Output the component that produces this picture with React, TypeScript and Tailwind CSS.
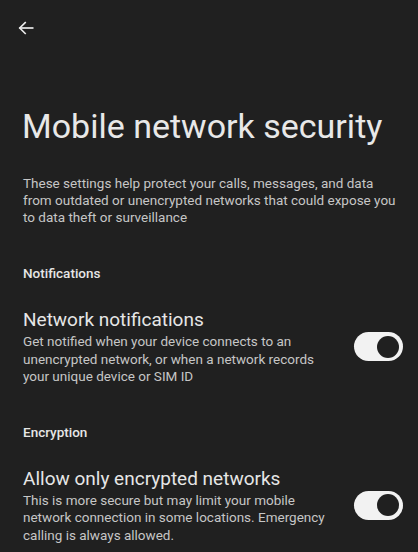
import React from "react";

function Toggle() {
  return (
    <div className="w-[49px] h-[29px] rounded-full bg-[#f2f2f2] flex items-center justify-end pr-[4px] shrink-0">
      <div className="w-[22px] h-[22px] rounded-full bg-[#202020]" />
    </div>
  );
}

function Row({ title, desc }: { title: string; desc: string }) {
  return (
    <div className="flex items-center pl-[23px] pr-[15px]">
      <div className="flex-1 min-w-0">
        <div className="text-[19px] leading-[24px] text-[#e6e6e6]">{title}</div>
        <div className="text-[13.5px] leading-[17.5px] text-[#c6c6c6] mt-[1px] pr-[20px]">{desc}</div>
      </div>
      <Toggle />
    </div>
  );
}

export default function App() {
  return (
    <div
      className="w-[418px] h-[552px] bg-[#202020] overflow-hidden"
      style={{ fontFamily: "Roboto, 'Open Sans', sans-serif" }}
    >
      <div className="pt-[18px] pl-[16px]">
        <svg width="20" height="20" viewBox="0 0 24 24" fill="none" stroke="#ececec" strokeWidth="2" strokeLinecap="square">
          <path d="M20 12H5" />
          <path d="M11 5.5L4.5 12L11 18.5" />
        </svg>
      </div>
      <h1 className="mt-[68px] pl-[22px] text-[34px] leading-[40px] text-[#e8e8e8]">Mobile network security</h1>
      <p className="mt-[29px] pl-[23px] pr-[18px] text-[13.5px] leading-[17px] text-[#c6c6c6]">
        These settings help protect your calls, messages, and data from outdated or unencrypted networks that could expose you to data theft or surveillance
      </p>
      <div className="mt-[38px] pl-[23px] text-[13.5px] leading-[18px] font-medium text-[#e6e6e6]">Notifications</div>
      <div className="mt-[26px]">
        <Row
          title="Network notifications"
          desc="Get notified when your device connects to an unencrypted network, or when a network records your unique device or SIM ID"
        />
      </div>
      <div className="mt-[37px] pl-[23px] text-[13.5px] leading-[18px] font-medium text-[#e6e6e6]">Encryption</div>
      <div className="mt-[26px]">
        <Row
          title="Allow only encrypted networks"
          desc="This is more secure but may limit your mobile network connection in some locations. Emergency calling is always allowed."
        />
      </div>
    </div>
  );
}
